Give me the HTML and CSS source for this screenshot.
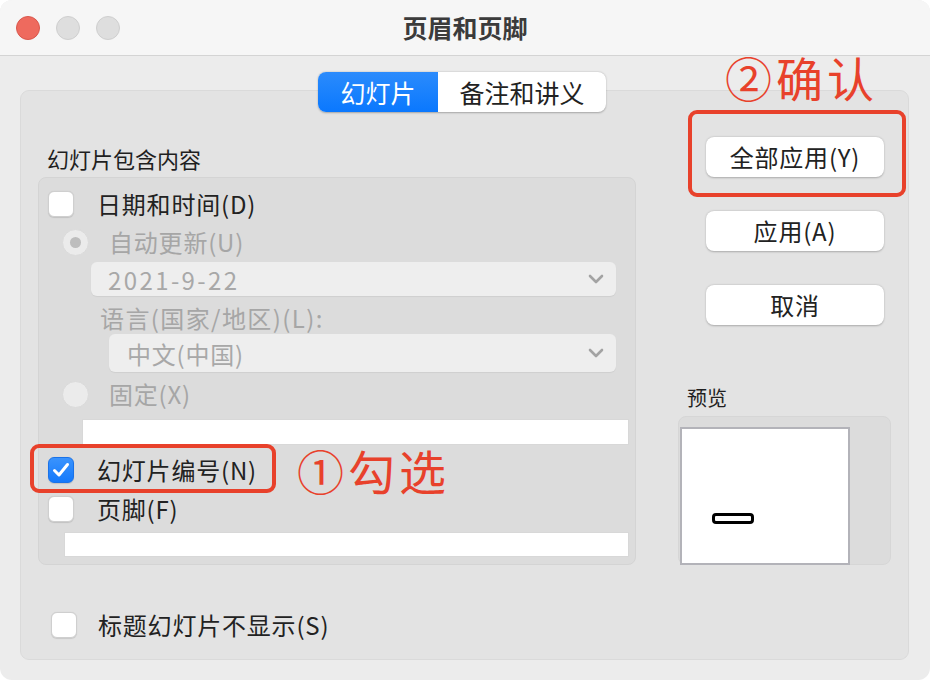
FILE: index.html
```html
<!DOCTYPE html>
<html lang="zh-CN">
<head>
<meta charset="utf-8">
<title>页眉和页脚</title>
<link rel="stylesheet" href="styles.css">
</head>
<body>
<div class="window">
  <div class="titlebar">
    <div class="lights">
      <span class="light red"></span>
      <span class="light gray"></span>
      <span class="light gray"></span>
    </div>
    <div class="title">页眉和页脚</div>
  </div>

  <div class="panel">
    <div class="tabs">
      <div class="tab active">幻灯片</div>
      <div class="tab">备注和讲义</div>
    </div>

    <div class="main">
      <div class="left">
        <div class="section-label">幻灯片包含内容</div>
        <div class="group">
          <div class="row row-check">
            <span class="checkbox"></span>
            <span class="label">日期和时间(D)</span>
          </div>
          <div class="row row-radio">
            <span class="radio on"></span>
            <span class="label dim">自动更新(U)</span>
          </div>
          <div class="select select-date">
            <span class="select-text">2021-9-22</span>
            <svg class="chev" width="16" height="10" viewBox="0 0 16 10"><path d="M2 2 L8 8 L14 2" fill="none" stroke="#a3a3a3" stroke-width="2.6" stroke-linecap="round" stroke-linejoin="round"/></svg>
          </div>
          <div class="lang-label dim">语言(国家/地区)(L):</div>
          <div class="select select-lang">
            <span class="select-text">中文(中国)</span>
            <svg class="chev" width="16" height="10" viewBox="0 0 16 10"><path d="M2 2 L8 8 L14 2" fill="none" stroke="#a3a3a3" stroke-width="2.6" stroke-linecap="round" stroke-linejoin="round"/></svg>
          </div>
          <div class="row row-radio2">
            <span class="radio"></span>
            <span class="label dim">固定(X)</span>
          </div>
          <div class="input input-fixed"></div>
          <div class="row row-check2">
            <span class="checkbox checked">
              <svg width="18" height="16" viewBox="0 0 18 16"><path d="M2.5 8.5 L7 13 L15.5 2.5" fill="none" stroke="#fff" stroke-width="3" stroke-linecap="round" stroke-linejoin="round"/></svg>
            </span>
            <span class="label">幻灯片编号(N)</span>
          </div>
          <div class="row row-check3">
            <span class="checkbox"></span>
            <span class="label">页脚(F)</span>
          </div>
          <div class="input input-footer"></div>
        </div>
        <div class="row row-title">
          <span class="checkbox"></span>
          <span class="label">标题幻灯片不显示(S)</span>
        </div>
      </div>

      <div class="right">
        <div class="btn btn-first">全部应用(Y)</div>
        <div class="btn">应用(A)</div>
        <div class="btn">取消</div>
        <div class="preview-label">预览</div>
        <div class="preview">
          <div class="slide">
            <div class="slide-bar"></div>
          </div>
        </div>
      </div>
    </div>
  </div>

  <div class="note-box note-box-1"></div>
  <div class="note note-1">①勾选</div>
  <div class="note note-2">②确认</div>
  <div class="note-box note-box-2"></div>
</div>
</body>
</html>
```

FILE: styles.css
```css
html, body {
  margin: 0;
  padding: 0;
  background: #ffffff;
  overflow: hidden;
}

body {
  font-family: "Noto Sans CJK SC", "Noto Sans", sans-serif;
  color: #222;
}

.window {
  position: relative;
  width: 930px;
  height: 680px;
  background: #ececec;
  border-radius: 12px;
  overflow: hidden;
  box-sizing: border-box;
}

.titlebar {
  height: 55px;
  background: #f6f6f6;
  border-bottom: 1px solid #d4d4d4;
  display: flex;
  align-items: center;
  position: relative;
}

.lights {
  display: flex;
  gap: 16px;
  padding-left: 16px;
}

.light {
  width: 24px;
  height: 24px;
  border-radius: 50%;
  box-sizing: border-box;
}

.light.red {
  background: #ee6a5e;
  border: 1px solid #d9574c;
}

.light.gray {
  background: #dedede;
  border: 1px solid #cfcfcf;
}

.title {
  position: absolute;
  left: 0;
  right: 0;
  top: 0;
  height: 55px;
  line-height: 55px;
  text-align: center;
  font-size: 25px;
  font-weight: 600;
  color: #3b3b3b;
  pointer-events: none;
}

.panel {
  margin: 34px 21px 0 20px;
  height: 570px;
  box-sizing: border-box;
  background: #e3e3e3;
  border: 1px solid #dadada;
  border-radius: 9px;
}

.tabs {
  display: flex;
  margin-top: -19px;
  margin-left: 297px;
  width: 288px;
  height: 40px;
  border-radius: 8px;
  background: #fff;
  box-shadow: 0 0.5px 2px rgba(0, 0, 0, 0.28);
  overflow: hidden;
}

.tab {
  height: 40px;
  line-height: 40px;
  font-size: 25px;
  text-align: center;
  color: #222;
}

.tab.active {
  width: 120px;
  background: linear-gradient(#2b8bfc, #0a78fe);
  color: #fff;
}

.tab:not(.active) {
  flex: 1;
}

.main {
  display: flex;
  align-items: flex-start;
}

.left {
  width: 640px;
  flex: none;
}

.section-label {
  margin-top: 32px;
  padding-left: 26px;
  height: 28px;
  line-height: 28px;
  font-size: 22px;
  color: #1f1f1f;
}

.group {
  margin-top: 5px;
  margin-left: 17px;
  width: 598px;
  height: 388px;
  box-sizing: border-box;
  background: #dcdcdc;
  border: 1px solid #d4d4d4;
  border-radius: 8px;
  padding-top: 9px;
}

.row {
  display: flex;
  align-items: center;
  height: 34px;
}

.label {
  font-size: 24px;
  line-height: 34px;
  letter-spacing: 0.8px;
  color: #222;
  white-space: nowrap;
}

.dim {
  color: #a6a6a6;
}

.checkbox {
  width: 26px;
  height: 26px;
  box-sizing: border-box;
  border-radius: 6px;
  background: #fff;
  border: 1px solid #cfcfcf;
  box-shadow: 0 0.5px 1px rgba(0, 0, 0, 0.12);
  flex: none;
  display: flex;
  align-items: center;
  justify-content: center;
}

.checkbox.checked {
  background: linear-gradient(#3a93fd, #1479fb);
  border-color: #1a72e8;
}

.row-check,
.row-check2,
.row-check3 {
  padding-left: 9px;
  gap: 23px;
}

.row-check2 {
  margin-top: 8px;
}

.row-check3 {
  margin-top: 5px;
}

.radio {
  width: 27px;
  height: 27px;
  box-sizing: border-box;
  border-radius: 50%;
  background: #ebebeb;
  border: 1px solid #dadada;
  flex: none;
  display: flex;
  align-items: center;
  justify-content: center;
}

.radio.on::after {
  content: "";
  width: 11px;
  height: 11px;
  border-radius: 50%;
  background: #bdbdbd;
}

.row-radio,
.row-radio2 {
  padding-left: 23px;
  gap: 20px;
}

.row-radio {
  margin-top: 4px;
}

.row-radio2 {
  margin-top: 5px;
}

.select {
  display: flex;
  align-items: center;
  justify-content: space-between;
  box-sizing: border-box;
  background: #eeeeee;
  border-radius: 6px;
  box-shadow: 0 1px 1px rgba(0, 0, 0, 0.06);
  padding-right: 12px;
}

.select-text {
  font-size: 24px;
  color: #a8a8a8;
  white-space: nowrap;
}

.select-date {
  margin-top: 3px;
  margin-left: 52px;
  width: 525px;
  height: 34px;
  padding-left: 17px;
}

.select-date .select-text {
  letter-spacing: 2.4px;
}

.select-lang {
  margin-top: 1px;
  margin-left: 70px;
  width: 507px;
  height: 38px;
  padding-left: 18px;
}

.select-lang .select-text {
  letter-spacing: 0.8px;
}

.lang-label {
  margin-top: 7px;
  margin-left: 61px;
  height: 30px;
  line-height: 30px;
  font-size: 24px;
  letter-spacing: 1.4px;
  white-space: nowrap;
}

.input {
  background: #fff;
  box-sizing: border-box;
  border: 1px solid #d8d8d8;
}

.input-fixed {
  margin-top: 8px;
  margin-left: 43px;
  width: 547px;
  height: 26px;
}

.input-footer {
  margin-top: 6px;
  margin-left: 25px;
  width: 565px;
  height: 25px;
}

.row-title {
  margin-top: 43px;
  padding-left: 30px;
  gap: 21px;
}

.right {
  flex: 1;
}

.btn {
  margin-left: 45px;
  width: 178px;
  height: 40px;
  line-height: 40px;
  text-align: center;
  font-size: 24px;
  letter-spacing: 0.8px;
  color: #222;
  background: #fff;
  border-radius: 8px;
  box-shadow: 0 0.5px 2px rgba(0, 0, 0, 0.25);
  margin-top: 34px;
}

.btn-first {
  margin-top: 25px;
}

.preview-label {
  margin-top: 59px;
  margin-left: 26px;
  height: 28px;
  line-height: 28px;
  font-size: 20px;
  color: #1f1f1f;
}

.preview {
  margin-top: 4px;
  margin-left: 17px;
  width: 213px;
  height: 149px;
  background: #dcdcdc;
  border: 1px solid #d6d6d6;
  box-sizing: border-box;
  border-radius: 8px;
  padding-top: 10px;
  padding-left: 1px;
}

.slide {
  width: 170px;
  height: 138px;
  box-sizing: border-box;
  background: #fff;
  border: 2px solid #b3b3b9;
  padding-top: 84px;
  padding-left: 30px;
}

.slide-bar {
  width: 42px;
  height: 11px;
  box-sizing: border-box;
  border: 3px solid #000;
  border-radius: 4px;
}

/* annotations drawn over the dialog */
.note-box {
  position: absolute;
  box-sizing: border-box;
  border: 4px solid #e8412b;
  border-radius: 9px;
}

.note-box-1 {
  left: 30px;
  top: 444px;
  width: 246px;
  height: 49px;
}

.note-box-2 {
  left: 688px;
  top: 110px;
  width: 218px;
  height: 87px;
}

.note {
  position: absolute;
  font-size: 47px;
  line-height: 50px;
  letter-spacing: 4px;
  color: #e8412b;
  white-space: nowrap;
}

.note-1 {
  left: 297px;
  top: 445px;
}

.note-2 {
  left: 725px;
  top: 52px;
}
```
